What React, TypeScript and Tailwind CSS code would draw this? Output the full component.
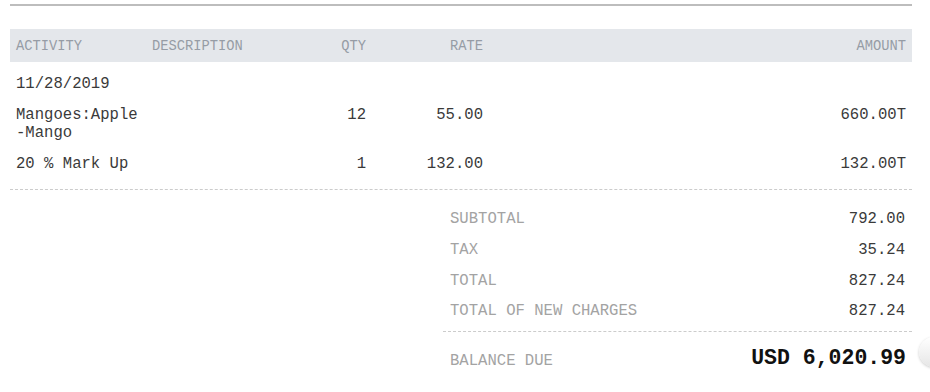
import React from "react";

const mono = { fontFamily: '"Courier New", "Liberation Mono", monospace' };

type Line = { activity: string[]; qty: string; rate: string; amount: string };

const lines: Line[] = [
  { activity: ["Mangoes:Apple", "-Mango"], qty: "12", rate: "55.00", amount: "660.00T" },
  { activity: ["20 % Mark Up"], qty: "1", rate: "132.00", amount: "132.00T" },
];

const totals = [
  { label: "SUBTOTAL", value: "792.00" },
  { label: "TAX", value: "35.24" },
  { label: "TOTAL", value: "827.24" },
  { label: "TOTAL OF NEW CHARGES", value: "827.24" },
];

const cols = "grid grid-cols-[136px_154px_72px_117px_1fr]";

export default function App() {
  return (
    <div className="relative min-h-[392px] w-[930px] overflow-hidden bg-white" style={mono}>
      <div className="pt-[4px] pl-[10px]">
        <div className="h-[2px] w-[902px] bg-[#bdbdbd]" />

        {/* column headings */}
        <div
          className={`${cols} mt-[23px] h-[33px] w-[902px] items-center bg-[#e4e7eb] pt-[3px] text-[13.75px] text-[#969ca5]`}
        >
          <div className="pl-[6px]">ACTIVITY</div>
          <div className="pl-[6px]">DESCRIPTION</div>
          <div className="pr-[6px] text-right">QTY</div>
          <div className="pr-[6px] text-right">RATE</div>
          <div className="pr-[6px] text-right">AMOUNT</div>
        </div>

        {/* line items */}
        <div className="flex w-[902px] flex-col gap-[13px] border-b border-dashed border-[#cccccc] pt-[13px] pb-[16px] text-[15.6px] leading-[18px] text-[#3a3a3a]">
          <div className="pl-[6px]">11/28/2019</div>
          {lines.map((l, i) => (
            <div key={i} className={cols}>
              <div className="pl-[6px]">
                {l.activity.map((a) => (
                  <div key={a}>{a}</div>
                ))}
              </div>
              <div />
              <div className="pr-[6px] text-right">{l.qty}</div>
              <div className="pr-[6px] text-right">{l.rate}</div>
              <div className="pr-[6px] text-right">{l.amount}</div>
            </div>
          ))}
        </div>

        {/* totals */}
        <div className="ml-[433px] w-[469px] pt-[14px]">
          <div className="border-b border-dashed border-[#cccccc] pb-[4px]">
            {totals.map((t) => (
              <div
                key={t.label}
                className="flex h-[30.67px] items-center justify-between pl-[7px] pr-[7px] text-[15.6px] leading-[18px]"
              >
                <span className="text-[#a3a3a3]">{t.label}</span>
                <span className="text-[#3a3a3a]">{t.value}</span>
              </div>
            ))}
          </div>
          <div className="flex items-baseline justify-between pt-[12px] pl-[7px] pr-[6px]">
            <span className="relative top-[1px] text-[15.6px] leading-[18px] text-[#a3a3a3]">BALANCE DUE</span>
            <span className="text-[21.5px] font-bold leading-[28px] text-[#111111]">USD 6,020.99</span>
          </div>
        </div>
      </div>

      {/* floating action button peeking from the edge */}
      <div className="absolute left-[919px] top-[337px] h-[30px] w-[30px] rounded-full bg-gradient-to-b from-white to-[#e6e6e6] shadow-[0_1px_3px_rgba(0,0,0,0.22)]" />
    </div>
  );
}
